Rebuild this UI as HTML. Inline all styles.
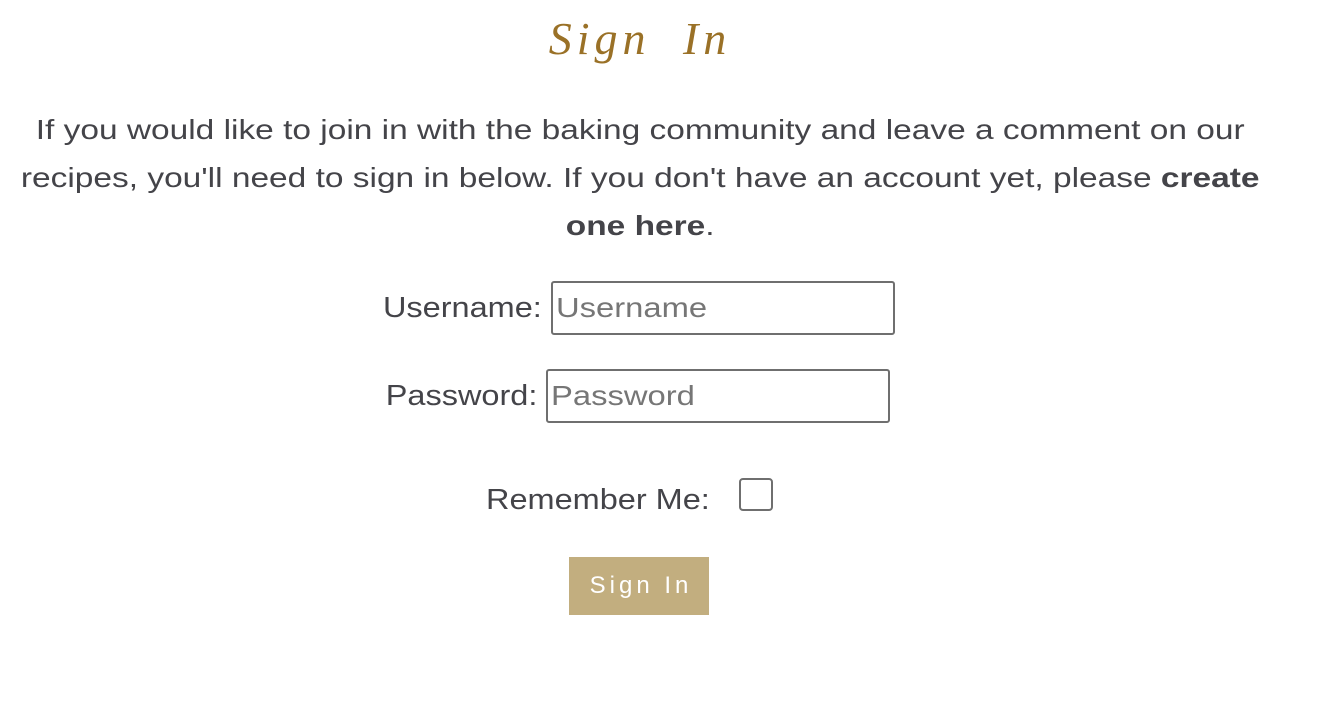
<!DOCTYPE html>
<html><head><style>
body{margin:0;width:1336px;height:704px;background:#fff;font-family:"Liberation Sans",sans-serif;color:#444449;position:relative;overflow:hidden}
.a{position:absolute;white-space:nowrap;transform:scaleX(1.12);transform-origin:right center}
h1{position:absolute;left:0;width:1280px;top:12px;margin:0;text-align:center;font:italic 46px "Liberation Serif",serif;color:#9a7127;letter-spacing:5px;word-spacing:16px}
p{position:absolute;left:0;width:1280px;top:106px;margin:0;text-align:center;font-size:28px;line-height:48px;transform:scaleX(1.195);transform-origin:639px 0}
.in{position:absolute;border:2px solid #6f6f6f;border-radius:3px;box-sizing:border-box;font-size:28px;color:#767676;padding-left:3px;line-height:49px}
.in span{display:inline-block;transform:scaleX(1.17);transform-origin:left center}
.lbl{font-size:29px}
</style></head><body>
<h1>Sign In</h1>
<p>If you would like to join in with the baking community and leave a comment on our<br>recipes, you'll need to sign in below. If you don't have an account yet, please <b>create<br>one here</b>.</p>
<div class="a lbl" style="right:794px;top:292px">Username:</div>
<div class="in" style="left:551px;top:281px;width:344px;height:54px"><span>Username</span></div>
<div class="a lbl" style="right:799px;top:380px">Password:</div>
<div class="in" style="left:546px;top:369px;width:344px;height:54px"><span>Password</span></div>
<div class="a lbl" style="right:626px;top:484px">Remember Me:</div>
<div style="position:absolute;left:739px;top:478px;width:34px;height:33px;border:2px solid #6f6f6f;border-radius:4px;box-sizing:border-box"></div>
<div style="position:absolute;left:569px;top:557px;width:140px;height:58px;background:#c2ae7f;color:#fff;font-size:24px;letter-spacing:4px;text-align:center;line-height:58px;text-indent:4px">Sign In</div>
</body></html>
